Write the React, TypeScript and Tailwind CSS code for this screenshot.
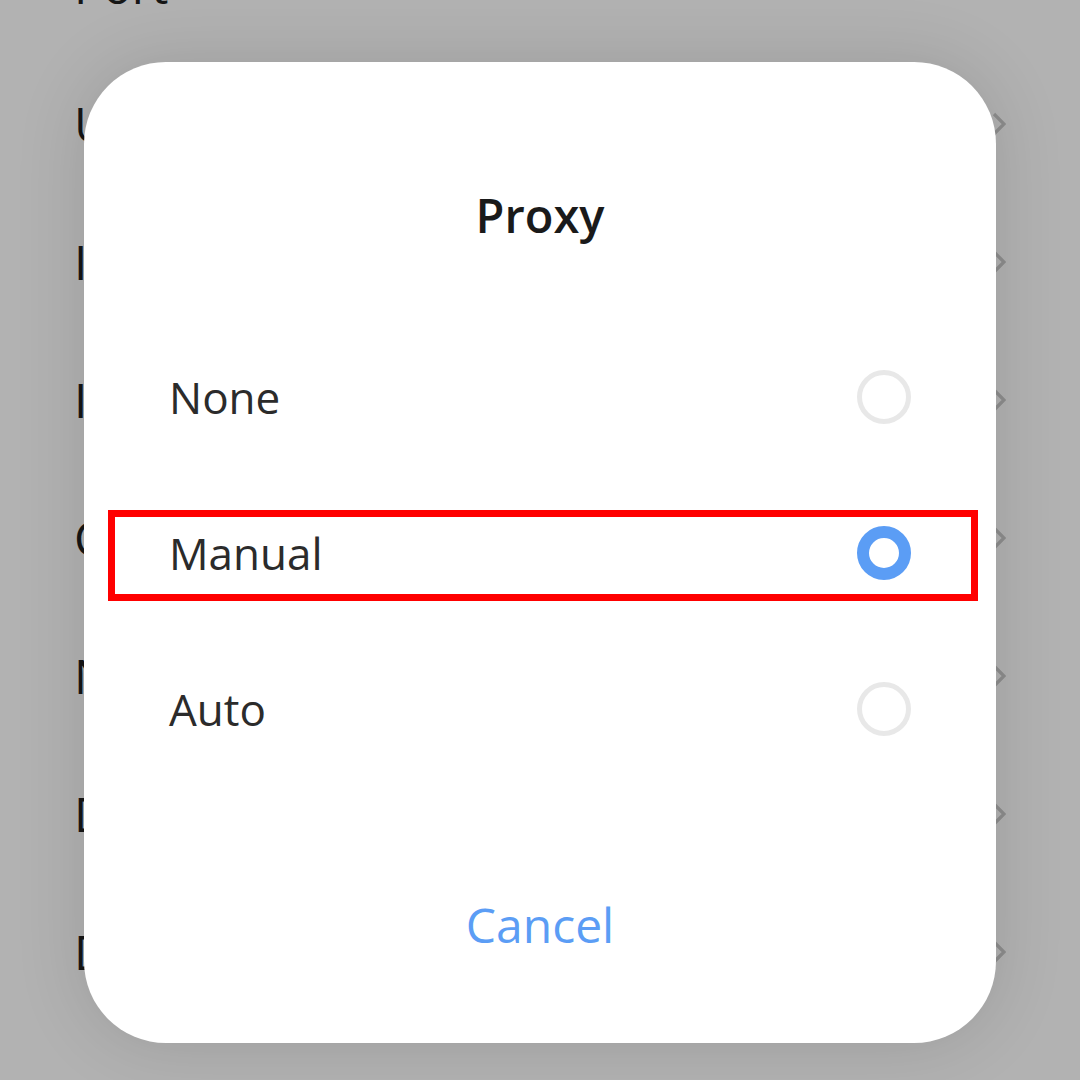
const rows = ['Port', 'Username', 'IP settings', 'IP address', 'Certificate', 'Network prefix length', 'DNS 1', 'DNS 2'];

const options = [
  { label: 'None', checked: false },
  { label: 'Manual', checked: true },
  { label: 'Auto', checked: false },
];

function Chevron() {
  return (
    <svg width="14" height="24" viewBox="0 0 14 24" fill="none">
      <path d="M2 2l10 10-10 10" stroke="#8d8d8d" strokeWidth="3.2" strokeLinejoin="miter" />
    </svg>
  );
}

function Radio({ checked }: { checked: boolean }) {
  if (checked) {
    return <div className="w-[54px] h-[54px] rounded-full border-[12px] border-[#5b9df5] bg-white" />;
  }
  return <div className="w-[54px] h-[54px] rounded-full border-[5px] border-[#e8e8e8] bg-white" />;
}

export default function App() {
  return (
    <div
      className="relative w-[1080px] h-[1080px] overflow-hidden bg-[#b2b2b2]"
      style={{ fontFamily: '"Open Sans", "Noto Sans", sans-serif' }}
    >
      {/* settings list behind the dialog */}
      <div className="flex flex-col -mt-[83px]">
        {rows.map((r) => (
          <div key={r} className="flex items-center justify-between h-[138px] pl-[74px] pr-[74px]">
            <span className="text-[48px] text-[#161616] whitespace-nowrap">{r}</span>
            <Chevron />
          </div>
        ))}
      </div>

      {/* dialog */}
      <div className="absolute left-[84px] top-[62px] w-[912px] h-[981px] rounded-[82px] bg-white shadow-[0_0_70px_rgba(0,0,0,0.13)] flex flex-col">
        <div className="pt-[123px] h-[60px] box-content text-center text-[47px] leading-[60px] font-semibold text-[#1a1a1a]">
          Proxy
        </div>
        <div className="mt-[74px] flex flex-col">
          {options.map((o) => (
            <div key={o.label} className="h-[156px] flex items-center justify-between px-[85px]">
              <span className="text-[44px] text-[#2b2b2b]">{o.label}</span>
              <Radio checked={o.checked} />
            </div>
          ))}
        </div>
        <div className="mt-[108px] text-center text-[48px] leading-[60px] text-[#5b9df5]">Cancel</div>
      </div>

      {/* highlight box */}
      <div className="absolute left-[108px] top-[510px] w-[870px] h-[91px] border-[7px] border-[#ff0000]" />
    </div>
  );
}
